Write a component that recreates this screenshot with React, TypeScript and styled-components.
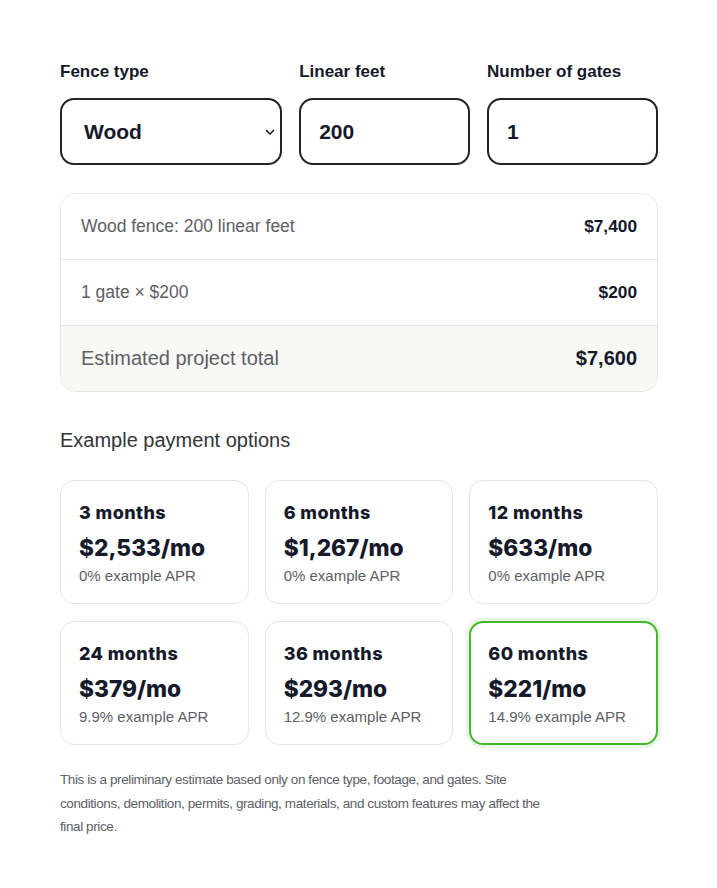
import styled, { createGlobalStyle, css } from 'styled-components';

type Plan = {
  months: number;
  monthly: string;
  apr: string;
};

const plans: Plan[] = [
  { months: 3, monthly: '$2,533/mo', apr: '0%' },
  { months: 6, monthly: '$1,267/mo', apr: '0%' },
  { months: 12, monthly: '$633/mo', apr: '0%' },
  { months: 24, monthly: '$379/mo', apr: '9.9%' },
  { months: 36, monthly: '$293/mo', apr: '12.9%' },
  { months: 60, monthly: '$221/mo', apr: '14.9%' },
];

const GlobalStyle = createGlobalStyle`
  body {
    margin: 0;
    background: #ffffff;
    font-family: 'Liberation Sans', Arial, sans-serif;
    color: #15192a;
  }
`;

const App = () => {
  return (
    <>
      <GlobalStyle />
      <Page>
        <Fields>
          <Field>
            <Label htmlFor="fence-type">Fence type</Label>
            <Select id="fence-type" defaultValue="wood">
              <option value="wood">Wood</option>
              <option value="vinyl">Vinyl</option>
              <option value="chain">Chain link</option>
            </Select>
          </Field>
          <Field>
            <Label htmlFor="linear-feet">Linear feet</Label>
            <Input id="linear-feet" type="text" defaultValue="200" />
          </Field>
          <Field>
            <Label htmlFor="gates">Number of gates</Label>
            <Input id="gates" type="text" defaultValue="1" />
          </Field>
        </Fields>

        <Breakdown>
          <Line>
            <LineLabel>Wood fence: 200 linear feet</LineLabel>
            <LineValue>$7,400</LineValue>
          </Line>
          <Line>
            <LineLabel>1 gate × $200</LineLabel>
            <LineValue>$200</LineValue>
          </Line>
          <Line $total>
            <LineLabel $total>Estimated project total</LineLabel>
            <LineValue $total>$7,600</LineValue>
          </Line>
        </Breakdown>

        <SectionTitle>Example payment options</SectionTitle>
        <PlanGrid>
          {plans.map((plan) => (
            <PlanCard key={plan.months} $active={plan.months === 60}>
              <PlanTerm>{plan.months} months</PlanTerm>
              <PlanPrice>{plan.monthly}</PlanPrice>
              <PlanApr>{plan.apr} example APR</PlanApr>
            </PlanCard>
          ))}
        </PlanGrid>

        <Note>
          This is a preliminary estimate based only on fence type, footage, and gates. Site
          conditions, demolition, permits, grading, materials, and custom features may affect
          the final price.
        </Note>
      </Page>
    </>
  );
};

export default App;

const Page = styled.main`
  box-sizing: border-box;
  width: 717px;
  min-height: 888px;
  padding: 62px 59px 40px 60px;
`;

const Fields = styled.div`
  display: grid;
  grid-template-columns: 1.3fr 1fr 1fr;
  gap: 17px;
`;

const Field = styled.div`
  display: flex;
  flex-direction: column;
  gap: 17px;
`;

const Label = styled.label`
  font-size: 17px;
  line-height: 19px;
  font-weight: 700;
  color: #15192a;
`;

const controlBase = css`
  box-sizing: border-box;
  width: 100%;
  height: 67px;
  margin: 0;
  border: 2px solid #222327;
  border-radius: 14px;
  background: #ffffff;
  font-family: 'Liberation Sans', Arial, sans-serif;
  font-size: 21px;
  font-weight: 700;
  color: #15192a;
  outline: none;
`;

const Select = styled.select`
  ${controlBase};
  padding: 0 6px 0 22px;
  appearance: none;
  background-image: url("data:image/svg+xml,%3Csvg xmlns='http://www.w3.org/2000/svg' width='10' height='6' viewBox='0 0 10 6'%3E%3Cpath d='M1 1l4 4 4-4' fill='none' stroke='%23222327' stroke-width='1.6'/%3E%3C/svg%3E");
  background-repeat: no-repeat;
  background-position: right 5px center;
`;

const Input = styled.input`
  ${controlBase};
  padding: 0 18px;
`;

const Breakdown = styled.section`
  margin-top: 28px;
  border: 1px solid #e6e6e6;
  border-radius: 16px;
  overflow: hidden;
`;

const Line = styled.div<{ $total?: boolean }>`
  display: flex;
  align-items: center;
  justify-content: space-between;
  height: 65px;
  padding: 0 20px;
  background: ${(p) => (p.$total ? '#f8f8f5' : '#ffffff')};

  & + & {
    border-top: 1px solid #e6e6e6;
  }
`;

const LineLabel = styled.span<{ $total?: boolean }>`
  font-size: ${(p) => (p.$total ? '20px' : '17.5px')};
  color: #5e5e66;
`;

const LineValue = styled.span<{ $total?: boolean }>`
  font-size: ${(p) => (p.$total ? '20px' : '17.3px')};
  font-weight: 700;
  color: #15192a;
`;

const SectionTitle = styled.h2`
  margin: 37px 0 28px;
  font-size: 20px;
  line-height: 23px;
  font-weight: 400;
  color: #333338;
`;

const PlanGrid = styled.div`
  display: grid;
  grid-template-columns: repeat(3, 1fr);
  gap: 17px 16px;
`;

const PlanCard = styled.div<{ $active?: boolean }>`
  box-sizing: border-box;
  height: 124px;
  padding: ${(p) => (p.$active ? '21px 17px' : '22px 18px')};
  border: ${(p) => (p.$active ? '2px solid #45b72c' : '1px solid #e6e6e6')};
  border-radius: 14px;
  box-shadow: ${(p) => (p.$active ? '0 0 0 3px rgba(69, 183, 44, 0.12)' : 'none')};
`;

const PlanTerm = styled.div`
  font-family: Inter, 'Liberation Sans', sans-serif;
  font-size: 18px;
  line-height: 20px;
  font-weight: 800;
  letter-spacing: 0.4px;
  color: #15192a;
`;

const PlanPrice = styled.div`
  margin-top: 12px;
  font-family: Inter, 'Liberation Sans', sans-serif;
  font-size: 22.7px;
  line-height: 26px;
  font-weight: 800;
  color: #15192a;
`;

const PlanApr = styled.div`
  margin-top: 6px;
  font-size: 15px;
  line-height: 18px;
  color: #5e5e66;
`;

const Note = styled.p`
  max-width: 495px;
  margin: 23px 0 0;
  font-size: 13.5px;
  letter-spacing: -0.4px;
  line-height: 23.5px;
  color: #5e5e66;
`;
